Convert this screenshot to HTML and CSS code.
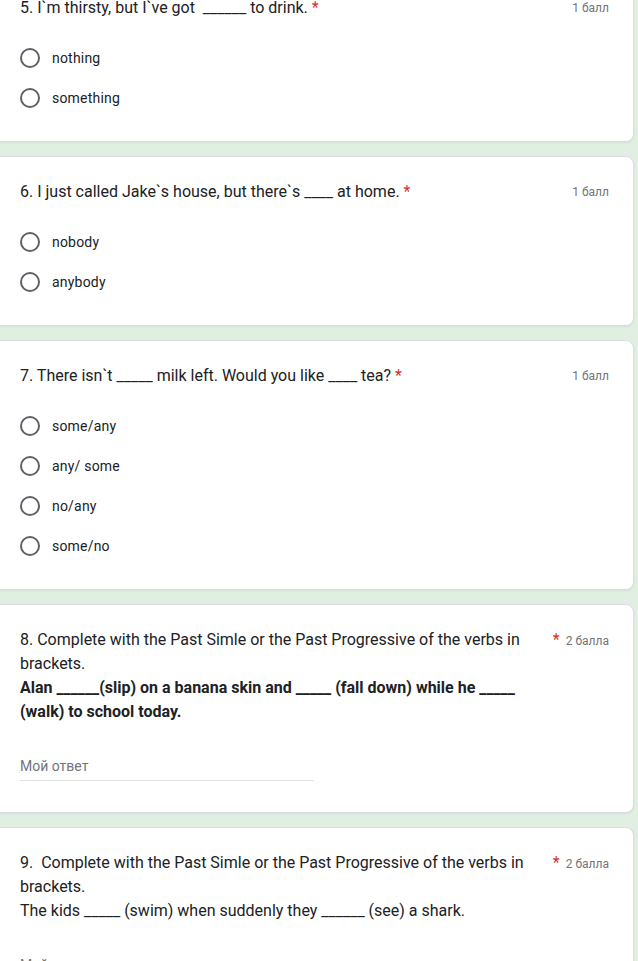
FILE: index.html
```html
<!DOCTYPE html>
<html>
<head>
<meta charset="utf-8">
<link rel="stylesheet" href="styles.css">
</head>
<body>
<div class="page">
  <div class="card first">
    <div class="head">
      <div class="title">5. I`m thirsty, but I`ve got &nbsp;______ to drink. <span class="req">*</span></div>
      <div class="points">1 балл</div>
    </div>
    <div class="options">
      <div class="opt"><span class="radio"></span><span class="label">nothing</span></div>
      <div class="opt"><span class="radio"></span><span class="label">something</span></div>
    </div>
  </div>

  <div class="card">
    <div class="head">
      <div class="title">6. I just called Jake`s house, but there`s ____ at home. <span class="req">*</span></div>
      <div class="points">1 балл</div>
    </div>
    <div class="options">
      <div class="opt"><span class="radio"></span><span class="label">nobody</span></div>
      <div class="opt"><span class="radio"></span><span class="label">anybody</span></div>
    </div>
  </div>

  <div class="card">
    <div class="head">
      <div class="title">7. There isn`t _____ milk left. Would you like ____ tea? <span class="req">*</span></div>
      <div class="points">1 балл</div>
    </div>
    <div class="options">
      <div class="opt"><span class="radio"></span><span class="label">some/any</span></div>
      <div class="opt"><span class="radio"></span><span class="label">any/ some</span></div>
      <div class="opt"><span class="radio"></span><span class="label">no/any</span></div>
      <div class="opt"><span class="radio"></span><span class="label">some/no</span></div>
    </div>
  </div>

  <div class="card">
    <div class="head">
      <div class="title wrap">8. Complete with the Past Simle or the Past Progressive of the verbs in brackets.<br><b>Alan ______(slip) on a banana skin and _____ (fall down) while he _____ (walk) to school today.</b></div>
      <div class="side"><span class="req">*</span><span class="points">2 балла</span></div>
    </div>
    <div class="answer">Мой ответ</div>
  </div>

  <div class="card">
    <div class="head">
      <div class="title wrap">9.&nbsp; Complete with the Past Simle or the Past Progressive of the verbs in brackets.<br>The kids _____ (swim) when suddenly they ______ (see) a shark.</div>
      <div class="side"><span class="req">*</span><span class="points">2 балла</span></div>
    </div>
    <div class="answer">Мой ответ</div>
  </div>
</div>
</body>
</html>
```
FILE: styles.css
```css
html, body {
  margin: 0;
  padding: 0;
  background: #e0efe1;
  font-family: Roboto, "Noto Sans", sans-serif;
  color: #202124;
  overflow: hidden;
}

.page {
  display: flex;
  flex-direction: column;
  gap: 14px;
  margin: 0 4px 0 -8px;
}

.card {
  background: #fff;
  border: 1px solid #dadce0;
  border-radius: 8px;
  box-shadow: 0 1px 2px rgba(60, 64, 67, 0.08);
  padding: 23px 24px 23px 27px;
}

.card.first {
  margin-top: -28px;
}

.head {
  display: flex;
  align-items: flex-start;
}

.title {
  flex: 1;
  font-size: 16px;
  line-height: 24px;
}

.title.wrap {
  max-width: 521px;
  margin-right: 12px;
}

.title b {
  font-weight: 700;
}

.req {
  color: #d93025;
}

.side {
  display: flex;
  align-items: baseline;
  gap: 6px;
  margin-left: auto;
  line-height: 24px;
}

.side .req {
  font-size: 16px;
}

.points {
  font-size: 12px;
  line-height: 24px;
  color: #70757a;
  white-space: nowrap;
}

.options {
  margin-top: 18px;
  display: flex;
  flex-direction: column;
}

.opt {
  height: 40px;
  display: flex;
  align-items: center;
  gap: 12px;
}

.radio {
  width: 16px;
  height: 16px;
  border: 2px solid #5f6368;
  border-radius: 50%;
  flex: none;
}

.label {
  font-size: 14px;
  letter-spacing: 0.2px;
}

.answer {
  margin-top: 32px;
  margin-bottom: 8px;
  width: 294px;
  font-size: 14px;
  line-height: 20px;
  color: #70757a;
  padding-bottom: 4px;
  border-bottom: 1px solid #e0e0e0;
}
```
